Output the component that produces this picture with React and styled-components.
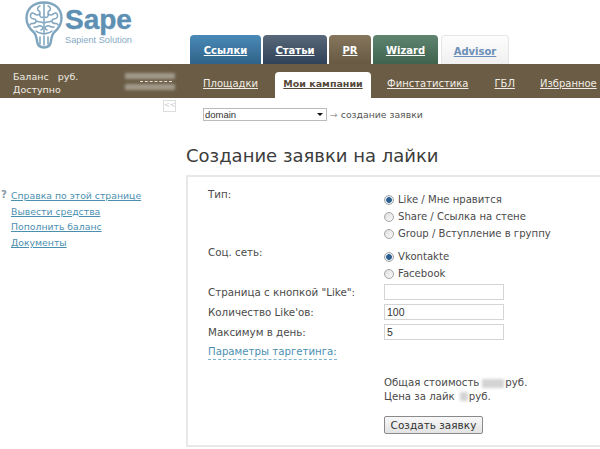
import React from 'react';
import styled, { createGlobalStyle } from 'styled-components';

const Global = createGlobalStyle`
  html, body { margin: 0; padding: 0; background: #fff; }
  body { font-family: "DejaVu Sans", Verdana, sans-serif; font-size: 10px; color: #4a4a4a; }
`;
const Page = styled.div`width: 600px; height: 449px; overflow: hidden; display: flex; flex-direction: column;`;
const Header = styled.header`height: 64px; display: flex; flex: none;`;
const LogoBox = styled.div`width: 190px; flex: none; padding: 1px 0 0 25px; box-sizing: border-box; display: flex; gap: 2px;`;
const LogoText = styled.div`display: flex; flex-direction: column; padding-top: 4px;`;
const LogoName = styled.div`font: bold 28px/30px "Liberation Sans", Arial, sans-serif; color: #5d90b3; -webkit-text-stroke: .4px #5d90b3;`;
const LogoSub = styled.div`font: 9.2px/11px "Liberation Sans", Arial, sans-serif; color: #86a9c2; margin-top: 0;`;
const Tabs = styled.nav`display: flex; align-items: flex-end; gap: 2px;`;
const Tab = styled.a`
  width: ${p => p.$w}px; height: 29px; box-sizing: border-box; border-radius: 4px 4px 0 0;
  margin-right: ${p => p.$mr || 0}px;
  background: linear-gradient(${p => p.$from}, ${p => p.$to});
  color: ${p => p.$color || '#fff'}; font-weight: bold; font-size: 10px; text-decoration: underline;
  display: flex; align-items: center; justify-content: center; padding-top: 2px;
  ${p => p.$light ? 'border: 1px solid #e6e6e6; border-bottom: 0;' : ''}
`;
const NavBar = styled.div`height: 34px; flex: none; background: #6a5c45; display: flex; align-items: flex-end; color: #eee8dc;`;
const Balance = styled.div`width: 125px; flex: none; align-self: center; box-sizing: border-box; padding: 3px 0 0 13px; font-size: 9.5px; line-height: 13px; color: #f1ede4;`;
const Hidden = styled.div`width: 78px; flex: none; align-self: center; display: flex; flex-direction: column; gap: 2px;`;
const Smear = styled.div`width: 50px; height: 6px; background: #a29a8b; filter: blur(1.5px);`;
const Dashes = styled.div`width: 32px; margin-left: 15px; border-top: 1px dashed #eee8dc;`;
const NavItem = styled.a`
  height: 26px; display: flex; align-items: center; padding-bottom: 3px; box-sizing: border-box;
  margin-right: ${p => p.$mr}px; color: #f1ede4; text-decoration: underline; font-size: 10px; white-space: nowrap;
`;
const NavActive = styled.a`
  width: 96px; height: 26px; box-sizing: border-box; flex: none; padding-bottom: 3px; background: #fff; border-radius: 4px 4px 0 0;
  margin-right: 16px; color: #54493a; font-weight: bold; font-size: 9.5px; text-decoration: underline;
  display: flex; align-items: center; justify-content: center; white-space: nowrap;
`;
const Body = styled.div`flex: 1; display: grid; grid-template-columns: 186px 1fr; min-height: 0;`;
const Side = styled.aside`display: flex; flex-direction: column;`;
const Collapse = styled.div`
  width: 11px; height: 10px; margin: 2px 0 0 163px; border: 1px solid #ddd; color: #c8c8c8; font-size: 7px; line-height: 9px; text-align: center;
`;
const SideLinks = styled.div`margin-top: 76px; padding-left: 11px; position: relative; display: flex; flex-direction: column;`;
const Q = styled.span`position: absolute; left: 1px; top: 1px; color: #8a98a2; font-size: 10px; font-weight: bold;`;
const SideLink = styled.a`font-size: 9.3px; line-height: 15.7px; color: #4b8fb0; text-decoration: underline;`;
const Main = styled.main`display: flex; flex-direction: column; min-width: 0;`;
const Crumb = styled.div`display: flex; align-items: center; gap: 3px; margin: 9px 0 0 17px; height: 14px; font-size: 9.3px; color: #555;`;
const Select = styled.div`
  width: 124px; height: 13px; box-sizing: border-box; border: 1px solid #bbb; background: #fff; color: #333;
  font: 9.5px/11px "Liberation Sans", Arial, sans-serif; padding-left: 1px; position: relative;
  &::after { content: ""; position: absolute; right: 3px; top: 4px; border: 3px solid transparent; border-top: 3px solid #111; }
`;
const Arrow = styled.span`color: #999;`;
const Title = styled.h1`margin: 24px 0 0; font-size: 18px; line-height: 22px; font-weight: normal; color: #3c3c3c; white-space: nowrap;`;
const Box = styled.section`
  margin-top: 8px; height: 272px; box-sizing: border-box; border: 2px solid #e8e8e8; border-right: 0;
  padding: 9px 0 0 20px; display: flex; flex-direction: column;
`;
const Row = styled.div`display: grid; grid-template-columns: 176px 1fr; margin-bottom: ${p => p.$mb || 0}px;`;
const Label = styled.div`font-size: 10.3px; line-height: 16px; color: #4a4a4a; white-space: nowrap;`;
const Radios = styled.div`display: flex; flex-direction: column; padding-top: ${p => p.$pt}px;`;
const RadioRow = styled.div`height: 17px; display: flex; align-items: center; gap: 4px; font-size: 10.1px; color: #4a4a4a; white-space: nowrap;`;
const RadioDot = styled.span`
  width: 10px; height: 10px; border-radius: 50%; box-sizing: border-box; flex: none; border: 1px solid #a5a5a5;
  background: ${p => p.$on ? 'radial-gradient(circle, #2a5f8f 0 2.5px, #e8eef3 3.2px)' : 'linear-gradient(135deg, #ddd, #fbfbfb)'};
`;
const Field = styled.div`
  width: 120px; height: 16px; box-sizing: border-box; border: 1px solid #d5d5d5; background: #fff;
  font: 10.5px/14px "Liberation Sans", Arial, sans-serif; color: #333; padding-left: 2px;
`;
const Targeting = styled.a`font-size: 10.2px; line-height: 14px; color: #4b8fb0; border-bottom: 1px dashed #7fb5cf; width: fit-content; margin-top: 5px;`;
const Totals = styled.div`margin: 16px 0 0 176px; font-size: 10.2px; line-height: 13.5px; color: #4a4a4a; white-space: nowrap;`;
const Blur = styled.span`display: inline-block; vertical-align: middle; width: ${p => p.$w}px; height: 9px; background: #d3d3d3; filter: blur(1.5px); margin: 0 1px 0 ${p => p.$ml}px;`;
const Submit = styled.button`
  margin: 13px 0 0 176px; width: 99px; height: 18px; padding: 0; box-sizing: border-box; border: 1px solid #8a8a8a; border-radius: 2px;
  background: linear-gradient(#f8f8f8, #e3e3e3); color: #333; font-family: inherit; font-size: 10.5px; line-height: 14px;
`;

const Brain = () => (
  <svg width="38" height="48" viewBox="0 0 38 48" fill="none" stroke="#7fa5bf" strokeWidth="1.5" strokeLinecap="round">
    <path d="M19 1.5C8 1.5 1.5 8 1.5 17c0 7 3.5 11 7 14 2.5 2 3 6 3.5 9 .5 4 3 6.5 7 6.5s6.5-2.5 7-6.5c.5-3 1-7 3.5-9 3.5-3 7-7 7-14 0-9-6.5-15.5-17.5-15.5Z" strokeWidth="2.4" />
    <path d="M19 3v29M19 33c-3-1-6-1-8-3M19 33c3-1 6-1 8-3" />
    <path d="M15 5c-3 1-3 4-1 5s1 4-2 4-4-4-6-1 1 5 3 5 3 3 1 4-5 0-5 2M15 13c-1 3 2 4 3 3M12 20c2 2 5 0 6 2M9 26c3 1 4-2 7-1s2 3 0 4" />
    <path d="M23 5c3 1 3 4 1 5s-1 4 2 4 4-4 6-1-1 5-3 5-3 3-1 4 5 0 5 2M23 13c1 3-2 4-3 3M26 20c-2 2-5 0-6 2M29 26c-3 1-4-2-7-1s-2 3 0 4" />
    <path d="M15 36v7M19 35v9M23 36v7" />
  </svg>
);

export default function App() {
  return (
    <Page>
      <Global />
      <Header>
        <LogoBox>
          <Brain />
          <LogoText>
            <LogoName>Sape</LogoName>
            <LogoSub>Sapient Solution</LogoSub>
          </LogoText>
        </LogoBox>
        <Tabs>
          <Tab $w={71} $from="#4a8ab8" $to="#2f6288">Ссылки</Tab>
          <Tab $w={64} $from="#59687a" $to="#2f4258">Статьи</Tab>
          <Tab $w={42} $from="#85765c" $to="#675943">PR</Tab>
          <Tab $w={65} $mr={1} $from="#5f8470" $to="#3f634d">Wizard</Tab>
          <Tab $w={68} $light $from="#fdfdfd" $to="#f0f0f0" $color="#6b8fb8">Advisor</Tab>
        </Tabs>
      </Header>
      <NavBar>
        <Balance>Баланс&nbsp;&nbsp; руб.<br />Доступно</Balance>
        <Hidden><Smear /><Dashes /><Smear /></Hidden>
        <NavItem $mr={17}>Площадки</NavItem>
        <NavActive>Мои кампании</NavActive>
        <NavItem $mr={26}>Финстатистика</NavItem>
        <NavItem $mr={25}>ГБЛ</NavItem>
        <NavItem $mr={0}>Избранное</NavItem>
      </NavBar>
      <Body>
        <Side>
          <Collapse>&lt;&lt;</Collapse>
          <SideLinks>
            <Q>?</Q>
            <SideLink>Справка по этой странице</SideLink>
            <SideLink>Вывести средства</SideLink>
            <SideLink>Пополнить баланс</SideLink>
            <SideLink>Документы</SideLink>
          </SideLinks>
        </Side>
        <Main>
          <Crumb><Select>domain</Select><Arrow>→</Arrow> создание заявки</Crumb>
          <Title>Создание заявки на лайки</Title>
          <Box>
            <Row $mb={2}>
              <Label>Тип:</Label>
              <Radios $pt={5}>
                <RadioRow><RadioDot $on />Like / Мне нравится</RadioRow>
                <RadioRow><RadioDot />Share / Ссылка на стене</RadioRow>
                <RadioRow><RadioDot />Group / Вступление в группу</RadioRow>
              </Radios>
            </Row>
            <Row $mb={2}>
              <Label>Соц. сеть:</Label>
              <Radios $pt={4}>
                <RadioRow><RadioDot $on />Vkontakte</RadioRow>
                <RadioRow><RadioDot />Facebook</RadioRow>
              </Radios>
            </Row>
            <Row $mb={4}><Label>Страница с кнопкой "Like":</Label><Field /></Row>
            <Row $mb={4}><Label>Количество Like'ов:</Label><Field>100</Field></Row>
            <Row><Label>Максимум в день:</Label><Field>5</Field></Row>
            <Targeting>Параметры таргетинга:</Targeting>
            <Totals>
              Общая стоимость<Blur $w={22} $ml={3} />руб.<br />
              Цена за лайк<Blur $w={8} $ml={5} />руб.
            </Totals>
            <Submit>Создать заявку</Submit>
          </Box>
        </Main>
      </Body>
    </Page>
  );
}
